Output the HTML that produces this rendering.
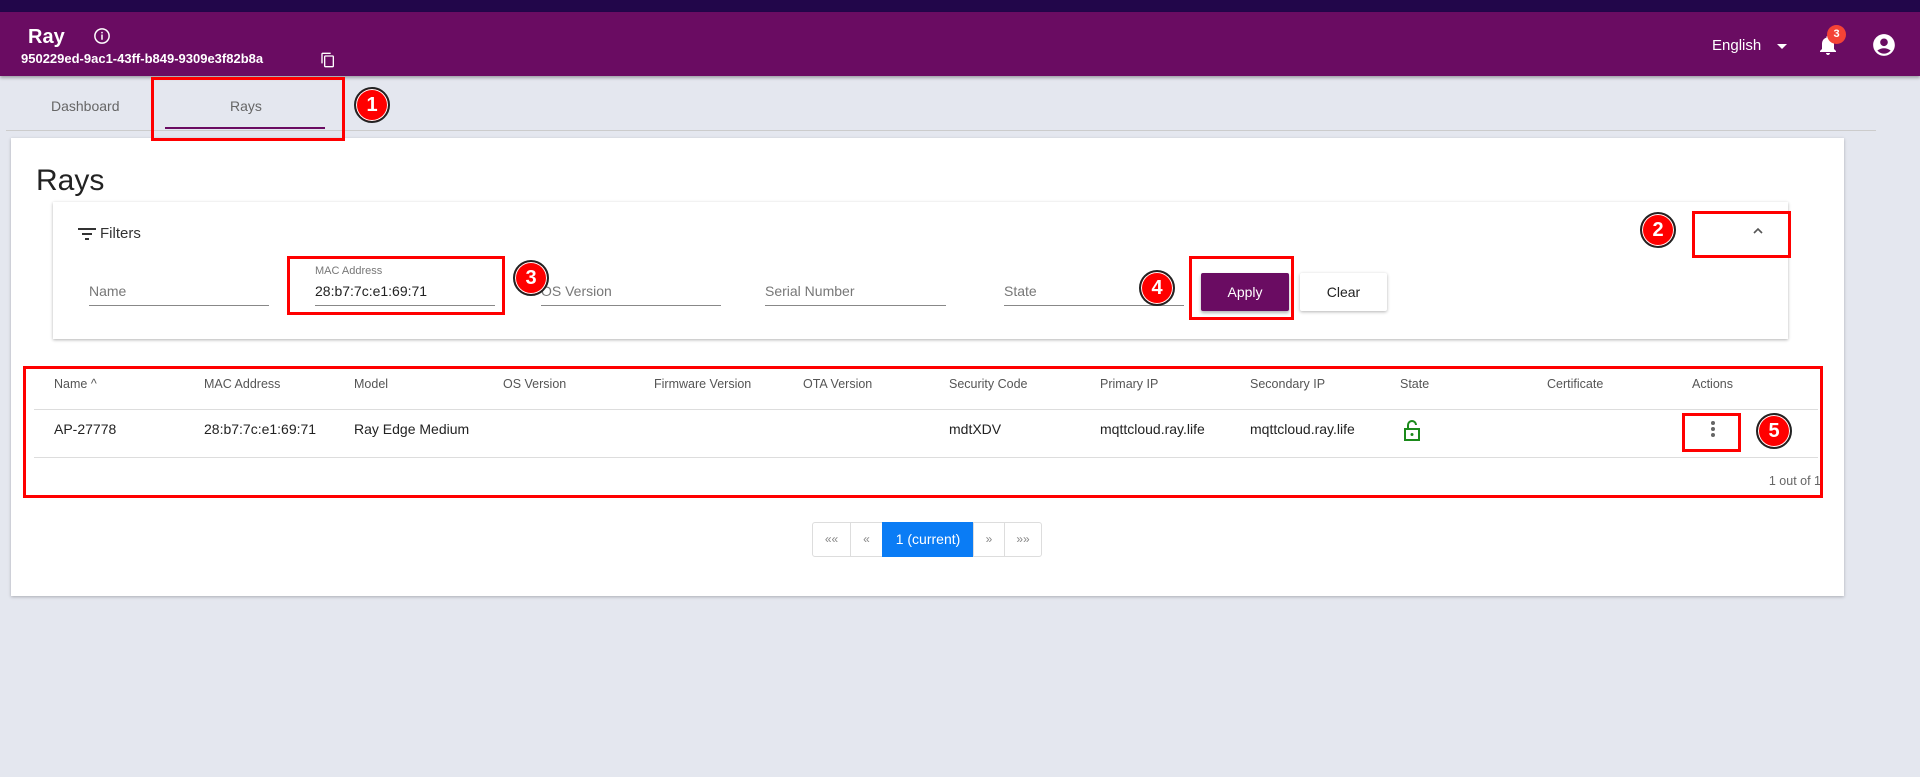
<!DOCTYPE html>
<html><head><meta charset="utf-8"><style>
*{box-sizing:border-box;margin:0;padding:0}
body{width:1920px;height:777px;background:#e4e7ef;font-family:"Liberation Sans",sans-serif;position:relative;overflow:hidden;color:#222}
.a{position:absolute}
.top{left:0;top:0;width:1920px;height:12px;background:#22064a}
.hdr{left:0;top:12px;width:1920px;height:64px;background:#6a0c62;box-shadow:0 2px 3px rgba(0,0,0,.3)}
.w{color:#fff}
.red{border:3px solid #f00;z-index:5}
.circ{z-index:6;width:36px;height:36px;border-radius:50%;background:#f00;border:2px solid #222;color:#fff;font-weight:bold;font-size:20px;text-align:center;line-height:32px;box-shadow:0 0 0 1px #fff inset}
.th{font-size:12.5px;color:#555;top:377px}
.td{font-size:14px;color:#222;top:421px}
.lbl{font-size:14px;color:#777}
.ul{height:1px;background:#888}
.pg{top:522px;height:35px;border:1px solid #ddd;background:#fff;color:#888;font-size:12px;text-align:center;line-height:33px}
</style></head><body>
<div class="a top"></div>
<div class="a hdr"></div>
<div class="a w" style="left:28px;top:26px;font-size:20px;font-weight:bold">Ray</div>
<svg class="a" style="left:93px;top:27px" width="18" height="18" viewBox="0 0 24 24"><circle cx="12" cy="12" r="9.5" fill="none" stroke="#fff" stroke-width="2"/><rect x="11" y="10" width="2" height="7" fill="#fff"/><rect x="11" y="6.5" width="2" height="2" fill="#fff"/></svg>
<div class="a w" style="left:21px;top:51px;font-size:13px;font-weight:bold">950229ed-9ac1-43ff-b849-9309e3f82b8a</div>
<svg class="a" style="left:320px;top:52px" width="16" height="16" viewBox="0 0 24 24"><path d="M16 1H4c-1.1 0-2 .9-2 2v14h2V3h12V1zm3 4H8c-1.1 0-2 .9-2 2v14c0 1.1.9 2 2 2h11c1.1 0 2-.9 2-2V7c0-1.1-.9-2-2-2zm0 16H8V7h11v14z" fill="#fff"/></svg>
<div class="a w" style="left:1712px;top:37px;font-size:15px">English</div>
<div class="a" style="left:1777px;top:44px;border-left:5px solid transparent;border-right:5px solid transparent;border-top:5px solid #fff"></div>
<svg class="a" style="left:1816px;top:33px" width="24" height="24" viewBox="0 0 24 24"><path d="M12 22c1.1 0 2-.9 2-2h-4c0 1.1.9 2 2 2zm6-6v-5c0-3.070-1.630-5.640-4.500-6.320V4c0-.830-.670-1.500-1.500-1.500s-1.500.670-1.500 1.500v.680C7.640 5.360 6 7.920 6 11v5l-2 2v1h16v-1l-2-2z" fill="#fff"/></svg>
<div class="a" style="left:1827px;top:25px;width:19px;height:19px;border-radius:50%;background:#f44336;color:#fff;font-size:11px;font-weight:bold;text-align:center;line-height:19px">3</div>
<svg class="a" style="left:1871px;top:32px" width="26" height="26" viewBox="0 0 24 24"><path d="M12 2C6.48 2 2 6.48 2 12s4.48 10 10 10 10-4.48 10-10S17.52 2 12 2zm0 4c1.93 0 3.5 1.57 3.5 3.5S13.93 13 12 13s-3.5-1.57-3.5-3.5S10.07 6 12 6zm0 14c-2.03 0-4.43-.82-6.14-2.88C7.55 15.8 9.68 15 12 15s4.45.8 6.14 2.12C16.43 19.18 14.03 20 12 20z" fill="#fff"/></svg>

<div class="a" style="left:51px;top:98px;font-size:14px;color:#666">Dashboard</div>
<div class="a" style="left:230px;top:98px;font-size:14px;color:#666">Rays</div>
<div class="a" style="left:165px;top:127px;width:160px;height:2px;background:#6a0c62"></div>
<div class="a" style="left:6px;top:130px;width:1870px;height:1px;background:#ccc"></div>

<div class="a" style="left:11px;top:138px;width:1833px;height:458px;background:#fff;box-shadow:0 1px 3px rgba(0,0,0,.25)"></div>
<div class="a red" style="left:151px;top:77px;width:194px;height:64px"></div>
<div class="a circ" style="left:354px;top:87px">1</div>
<div class="a" style="left:36px;top:164px;font-size:30px;color:#222">Rays</div>
<div class="a" style="left:53px;top:202px;width:1735px;height:137px;background:#fff;box-shadow:0 1px 3px rgba(0,0,0,.3)"></div>
<svg class="a" style="left:78px;top:227px" width="18" height="14" viewBox="0 0 18 14"><rect x="0" y="1" width="18" height="2" fill="#333"/><rect x="4" y="6" width="10" height="2" fill="#333"/><rect x="7" y="11" width="4" height="2" fill="#333"/></svg>
<div class="a" style="left:100px;top:225px;font-size:15px;color:#333">Filters</div>
<div class="a lbl" style="left:89px;top:283px">Name</div><div class="a ul" style="left:89px;top:305px;width:180px"></div>
<div class="a" style="left:315px;top:265px;font-size:11px;color:#777">MAC Address</div>
<div class="a" style="left:315px;top:283px;font-size:14px;color:#222">28:b7:7c:e1:69:71</div><div class="a ul" style="left:315px;top:305px;width:180px"></div>
<div class="a lbl" style="left:541px;top:283px">OS Version</div><div class="a ul" style="left:541px;top:305px;width:180px"></div>
<div class="a lbl" style="left:765px;top:283px">Serial Number</div><div class="a ul" style="left:765px;top:305px;width:181px"></div>
<div class="a lbl" style="left:1004px;top:283px">State</div><div class="a ul" style="left:1004px;top:305px;width:180px"></div>
<div class="a" style="left:1201px;top:273px;width:88px;height:38px;background:#6a0c62;color:#fff;font-size:14px;text-align:center;line-height:38px;border-radius:2px;box-shadow:0 2px 3px rgba(0,0,0,.3)">Apply</div>
<div class="a" style="left:1300px;top:273px;width:87px;height:38px;background:#fff;color:#222;font-size:14px;text-align:center;line-height:38px;border-radius:2px;box-shadow:0 1px 3px rgba(0,0,0,.3)">Clear</div>
<svg class="a" style="left:1751px;top:226px" width="14" height="10" viewBox="0 0 14 10"><path d="M3 7l4-4 4 4" fill="none" stroke="#555" stroke-width="1.6"/></svg>
<div class="a red" style="left:1692px;top:211px;width:99px;height:47px"></div>
<div class="a circ" style="left:1640px;top:212px">2</div>
<div class="a red" style="left:287px;top:256px;width:218px;height:59px"></div>
<div class="a circ" style="left:513px;top:260px">3</div>
<div class="a red" style="left:1189px;top:256px;width:105px;height:64px"></div>
<div class="a circ" style="left:1139px;top:270px">4</div>

<div class="a th" style="left:54px">Name ^</div>
<div class="a th" style="left:204px">MAC Address</div>
<div class="a th" style="left:354px">Model</div>
<div class="a th" style="left:503px">OS Version</div>
<div class="a th" style="left:654px">Firmware Version</div>
<div class="a th" style="left:803px">OTA Version</div>
<div class="a th" style="left:949px">Security Code</div>
<div class="a th" style="left:1100px">Primary IP</div>
<div class="a th" style="left:1250px">Secondary IP</div>
<div class="a th" style="left:1400px">State</div>
<div class="a th" style="left:1547px">Certificate</div>
<div class="a th" style="left:1692px">Actions</div>
<div class="a" style="left:34px;top:409px;width:1784px;height:1px;background:#ddd"></div>
<div class="a" style="left:34px;top:457px;width:1784px;height:1px;background:#ddd"></div>
<div class="a td" style="left:54px">AP-27778</div>
<div class="a td" style="left:204px">28:b7:7c:e1:69:71</div>
<div class="a td" style="left:354px">Ray Edge Medium</div>
<div class="a td" style="left:949px">mdtXDV</div>
<div class="a td" style="left:1100px">mqttcloud.ray.life</div>
<div class="a td" style="left:1250px">mqttcloud.ray.life</div>
<svg class="a" style="left:1402px;top:418px" width="20" height="24" viewBox="0 0 20 24"><path d="M6 11V7a4 4 0 0 1 8 0" fill="none" stroke="#1b8a1b" stroke-width="2"/><rect x="3" y="11" width="14" height="11" fill="none" stroke="#1b8a1b" stroke-width="2"/><circle cx="10" cy="16.5" r="1.5" fill="#1b8a1b"/></svg>
<div class="a" style="left:1711px;top:421px;width:4px;height:4px;border-radius:50%;background:#666;box-shadow:0 6px 0 #666,0 12px 0 #666"></div>
<div class="a red" style="left:1682px;top:413px;width:59px;height:39px"></div>
<div class="a circ" style="left:1756px;top:413px">5</div>
<div class="a" style="left:1760px;top:474px;font-size:12.5px;color:#666;width:61px;text-align:right;white-space:nowrap">1 out of 1</div>
<div class="a red" style="left:23px;top:366px;width:1800px;height:132px"></div>

<div class="a pg" style="left:812px;width:39px;border-radius:3px 0 0 3px">««</div>
<div class="a pg" style="left:850px;width:33px">«</div>
<div class="a pg" style="left:882px;width:92px;background:#0a7cf5;border-color:#0a7cf5;color:#fff;font-size:14px">1 (current)</div>
<div class="a pg" style="left:973px;width:32px">»</div>
<div class="a pg" style="left:1004px;width:38px;border-radius:0 3px 3px 0">»»</div>
</body></html>
